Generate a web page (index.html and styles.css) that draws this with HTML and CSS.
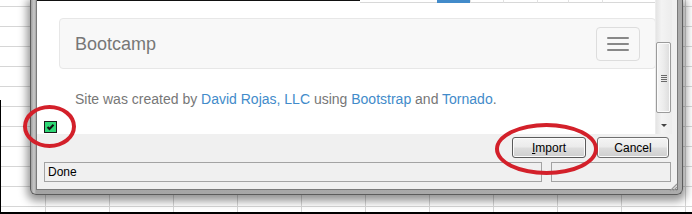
FILE: index.html
```html
<!DOCTYPE html>
<html>
<head>
<meta charset="utf-8">
<link rel="stylesheet" href="styles.css">
</head>
<body>
<div class="dialog">
  <div class="client">
    <div class="viewrow">
      <div class="page">
        <div class="topstrip">
          <div class="topline"></div>
          <ul class="pager">
            <li></li><li class="active"></li><li></li><li></li><li></li><li></li><li></li>
          </ul>
        </div>
        <nav class="navbar">
          <span class="brand">Bootcamp</span>
          <button class="toggle"><span class="bar"></span><span class="bar"></span><span class="bar"></span></button>
        </nav>
        <p class="footer">Site was created by <a href="#">David Rojas, LLC</a> using <a href="#">Bootstrap</a> and <a href="#">Tornado</a>.</p>
        <div class="check">
          <svg width="13" height="12" viewBox="0 0 13 12"><rect x="0.5" y="0.5" width="12" height="11" fill="#2fd876" stroke="#1a1a1a"/><path d="M3.5 6 L5.5 8 L9.5 3.8" fill="none" stroke="#111" stroke-width="2"/></svg>
        </div>
      </div>
      <div class="vscroll">
        <div class="thumb"><span class="griplines"></span></div>
        <div class="down"><span class="arrow"></span></div>
      </div>
    </div>
    <div class="buttons">
      <button class="btn btn-import"><u>I</u>mport</button>
      <button class="btn btn-cancel">Cancel</button>
    </div>
    <div class="statusbar">
      <div class="panel panel-main">Done</div>
      <div class="panel panel-side"></div>
    </div>
    <svg class="sizegrip" width="9" height="9" viewBox="0 0 9 9"><path d="M8 1 L1 8 M8 4 L4 8 M8 7 L7 8" stroke="#9a9a9a" stroke-width="1.2"/></svg>
  </div>
</div>
<div class="ring ring-check"></div>
<div class="ring ring-import"></div>
</body>
</html>
```
FILE: styles.css
```css
* { box-sizing: border-box; }
html, body { margin: 0; }
body {
  width: 692px;
  height: 214px;
  overflow: hidden;
  position: relative;
  padding-left: 30px;
  font-family: "Liberation Sans", Arial, sans-serif;
  background-color: #fff;
  background-image:
    linear-gradient(#000, #000),
    linear-gradient(#000, #000),
    linear-gradient(#d6d6d6 1px, transparent 1px),
    linear-gradient(90deg, #d6d6d6 1px, transparent 1px);
  background-repeat: no-repeat, no-repeat, repeat, repeat;
  background-size: 100% 2px, 1px 114px, 100% 20px, 64px 100%;
  background-position: 0 212px, 0 100px, 0 6px, 45px 0;
}

.dialog {
  width: 653px;
  height: 195px;
  border: 1px solid #5c5c5c;
  border-top: 0;
  border-radius: 0 0 6px 6px;
  padding: 0 4px 4px 5px;
  background: linear-gradient(90deg, #9e9e9e 0, #c9c9c9 3px, #a4a4a4 5px, #acacac 100%);
  box-shadow: 0 3px 9px 3px rgba(0, 0, 0, 0.42);
}

.client {
  position: relative;
  height: 100%;
  border: 1px solid #7a7a7a;
  border-top: 0;
  background: #f0f0f0;
  display: flex;
  flex-direction: column;
}

.viewrow {
  display: flex;
  height: 134px;
  flex: none;
}

.page {
  width: 618px;
  background: #fff;
  overflow: hidden;
  display: flex;
  flex-direction: column;
  font-size: 14px;
  color: #777;
}

.topstrip {
  height: 3px;
  display: flex;
  flex: none;
}
.topline {
  width: 323px;
  height: 1px;
  background: #111;
}
.pager {
  flex: 1;
  margin: 0 -2px 0 0;
  padding: 0;
  list-style: none;
  display: grid;
  grid-template-columns: 77px 33px 33px 34px 31px 34px 1fr;
}
.pager li {
  height: 3px;
  border-bottom: 1px solid #d8d8d8;
  border-left: 1px solid #e2e2e2;
}
.pager li:first-child { border-left: 0; }
.pager li.active {
  background: #428bca;
  border-color: #428bca;
}

.navbar {
  flex: none;
  height: 51px;
  margin: 15px -1px 0 22px;
  padding: 0 15px;
  border: 1px solid #e7e7e7;
  border-radius: 4px;
  background: #f8f8f8;
  display: flex;
  justify-content: space-between;
  align-items: flex-start;
}
.brand {
  font-size: 18px;
  line-height: 20px;
  padding: 15px 0;
  color: #777;
}
.toggle {
  margin-top: 8px;
  width: 44px;
  height: 34px;
  padding: 9px 10px;
  border: 1px solid #ddd;
  border-radius: 4px;
  background: transparent;
  display: flex;
  flex-direction: column;
  gap: 4px;
}
.bar {
  display: block;
  width: 22px;
  height: 2px;
  border-radius: 1px;
  background: #888;
}

.footer {
  margin: 20px 0 0;
  padding-left: 38px;
  line-height: 20px;
  white-space: nowrap;
}
.footer a {
  color: #428bca;
  text-decoration: none;
}

.check {
  margin: 12px 0 0 7px;
  height: 12px;
  line-height: 0;
}

.vscroll {
  width: 17px;
  display: flex;
  flex-direction: column;
  background: linear-gradient(90deg, #e4e4e4 0, #f3f3f3 35%, #ececec 100%);
  border-left: 1px solid #ececec;
}
.thumb {
  margin: 42px 0 0 0;
  width: 15px;
  height: 71px;
  border: 1px solid #9b9b9b;
  border-radius: 2px;
  background: linear-gradient(90deg, #f6f6f6 0, #ececec 50%, #dcdcdc 100%);
  box-shadow: inset 0 0 0 1px #fbfbfb;
  display: flex;
  justify-content: center;
  padding-top: 32px;
}
.griplines {
  display: block;
  width: 6px;
  height: 7px;
  background: repeating-linear-gradient(#6a6a6a 0 1px, transparent 1px 2px);
}
.down {
  margin-top: auto;
  height: 17px;
  display: flex;
  justify-content: center;
  padding-top: 7px;
}
.arrow {
  width: 0;
  height: 0;
  border-left: 3px solid transparent;
  border-right: 3px solid transparent;
  border-top: 3px solid #444;
}

.buttons {
  flex: none;
  height: 28px;
  display: flex;
  justify-content: flex-end;
  align-items: flex-start;
  gap: 11px;
  padding: 3px 8px 0 0;
}
.btn {
  height: 21px;
  padding: 0;
  font-family: "Liberation Sans", Arial, sans-serif;
  font-size: 12px;
  color: #000;
  border: 1px solid #707070;
  border-radius: 3px;
  background: linear-gradient(#f4f4f4 0%, #ebebeb 48%, #dddddd 52%, #cfcfcf 100%);
  box-shadow: inset 0 0 0 1px #fbfbfb;
}
.btn-import { width: 74px; border-color: #5a5a5a; }
.btn-cancel { width: 72px; }

.statusbar {
  flex: none;
  height: 20px;
  display: flex;
  gap: 9px;
  padding-left: 7px;
}
.panel {
  height: 20px;
  border: 1px solid #a3a3a3;
  font-size: 12px;
  line-height: 18px;
  padding-left: 3px;
  color: #000;
}
.panel-main { width: 498px; }
.panel-side { width: 120px; }

.sizegrip {
  position: absolute;
  right: -1px;
  bottom: -3px;
}

.ring {
  position: absolute;
  border: 4px solid #d3202a;
  border-radius: 50%;
}
.ring-check {
  left: 23px;
  top: 105px;
  width: 53px;
  height: 43px;
}
.ring-import {
  left: 495px;
  top: 123px;
  width: 103px;
  height: 52px;
}
```
